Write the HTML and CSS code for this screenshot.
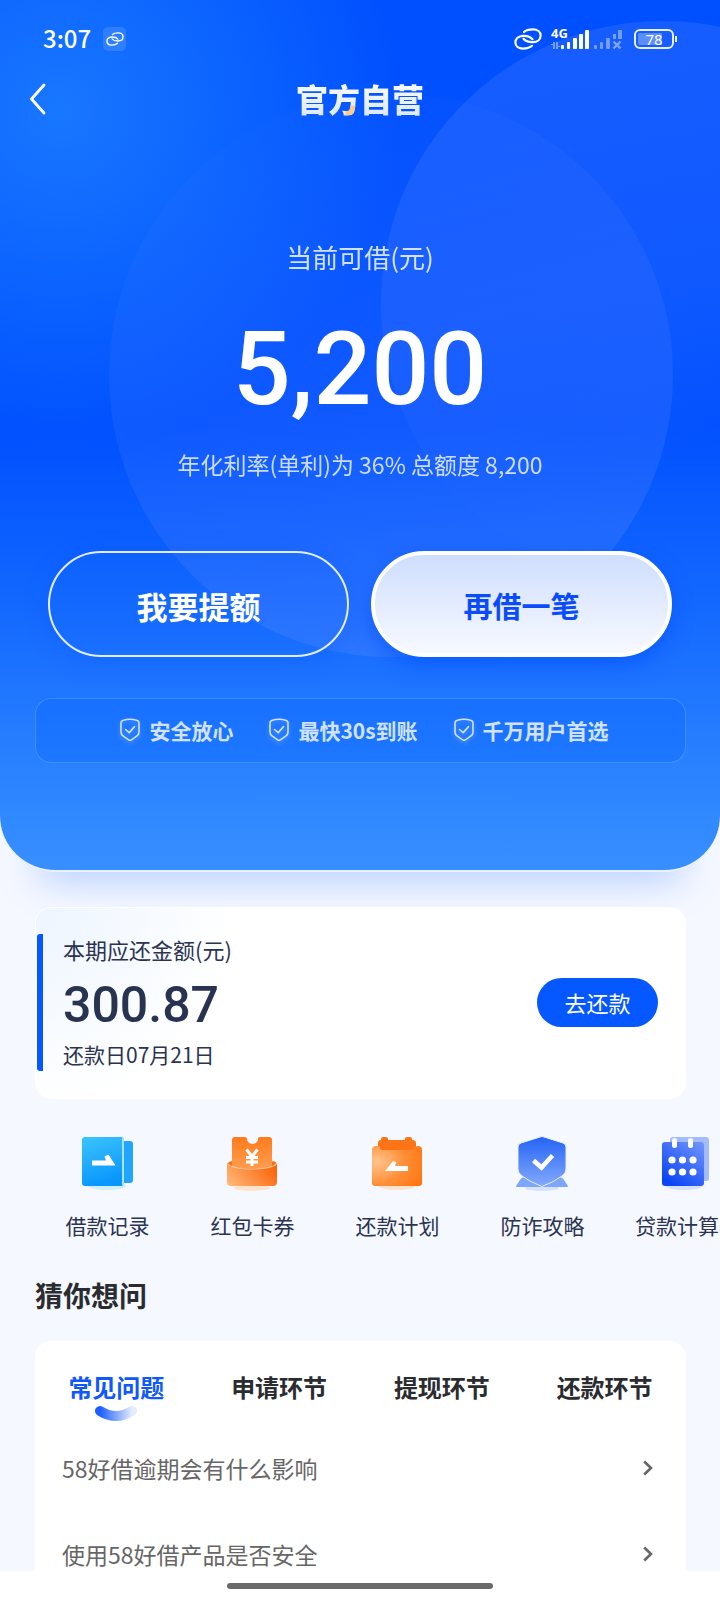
FILE: index.html
```html
<!DOCTYPE html>
<html lang="zh-CN">
<head>
<meta charset="utf-8">
<meta name="viewport" content="width=device-width, initial-scale=1">
<title>官方自营</title>
<link rel="stylesheet" href="styles.css">
</head>
<body>
<svg class="defs" aria-hidden="true">
  <defs>
    <symbol id="link" viewBox="0 0 28 22">
      <g fill="none" stroke="currentColor" stroke-width="2.2" stroke-linecap="round">
        <path d="M10 4 C12 2 15 1.400 19 1.400 C23.500 1.400 26.600 3.800 26.600 7.400 C26.600 11.200 23.500 14 19 14.200 C14.500 14.400 11.500 13.200 9.500 10.800"/>
        <path d="M18 17.800 C16 19.800 13 20.600 9 20.600 C4.500 20.600 1.400 18.200 1.400 14.600 C1.400 10.800 4.500 8 9 7.800 C13.500 7.600 16.500 8.800 18.500 11.200"/>
      </g>
    </symbol>
    <symbol id="shield" viewBox="0 0 20 24">
      <g fill="none" stroke="currentColor" stroke-width="1.600" stroke-linecap="round" stroke-linejoin="round">
        <path d="M3.400 2.200 Q10 .2 16.600 2.200 Q19 2.600 19 5 V14 Q19 16.500 17 17.800 L11.400 21.800 Q10 22.800 8.600 21.800 L3 17.800 Q1 16.500 1 14 V5 Q1 2.600 3.400 2.200 Z"/>
        <path d="M5.500 11.500 L9.200 14.600 L14.500 8.600"/>
      </g>
    </symbol>
    <symbol id="chevron" viewBox="0 0 12 18">
      <path d="M2.200 2.500 L9 9 L2.200 15.500" fill="none" stroke="currentColor" stroke-width="2.600"/>
    </symbol>
    <linearGradient id="sky" x1="0" y1="0" x2=".3" y2="1"><stop offset="0" stop-color="#3cc4fb"/><stop offset="1" stop-color="#0a97fd"/></linearGradient>
    <linearGradient id="orange" x1="0" y1="0" x2="0" y2="1"><stop offset="0" stop-color="#ff7a1c"/><stop offset="1" stop-color="#ff9d4e"/></linearGradient>
    <linearGradient id="wallet" x1="0" y1=".8" x2="1" y2=".4"><stop offset="0" stop-color="#ffb676"/><stop offset="1" stop-color="#fb660c"/></linearGradient>
    <radialGradient id="plan" cx=".1" cy=".4" r="1"><stop offset="0" stop-color="#ffc48c"/><stop offset=".55" stop-color="#ff8f38"/><stop offset="1" stop-color="#ff7612"/></radialGradient>
    <linearGradient id="guard" x1="0" y1="0" x2="0" y2="1"><stop offset="0" stop-color="#2463f4"/><stop offset="1" stop-color="#84aafc"/></linearGradient>
    <linearGradient id="calc" x1="1" y1="0" x2=".3" y2="1"><stop offset="0" stop-color="#7396ff"/><stop offset="1" stop-color="#0c46f4"/></linearGradient>
    <linearGradient id="smile" x1="0" y1="0" x2="1" y2="0"><stop offset="0" stop-color="#1c5eff"/><stop offset="1" stop-color="#e4ecff"/></linearGradient>
    <linearGradient id="ring1" x1=".4" y1="0" x2=".7" y2="1"><stop offset="0" stop-color="#6c90ff" stop-opacity=".02"/><stop offset=".45" stop-color="#6c90ff" stop-opacity=".13"/><stop offset="1" stop-color="#6c90ff" stop-opacity=".24"/></linearGradient>
    <linearGradient id="ring2" x1=".3" y1=".1" x2=".45" y2=".95"><stop offset="0" stop-color="#6489ff" stop-opacity=".22"/><stop offset=".45" stop-color="#6489ff" stop-opacity=".16"/><stop offset=".8" stop-color="#6489ff" stop-opacity=".02"/></linearGradient>
  </defs>
</svg>
<div class="app">
  <main class="content">
    <section class="hero">
      <svg class="hero-art" viewBox="0 0 720 871" preserveAspectRatio="xMidYMin slice" aria-hidden="true">
        <circle cx="391" cy="375" r="282" fill="url(#ring1)"/>
        <circle cx="663" cy="303" r="282" fill="url(#ring2)"/>
      </svg>
      <div class="status">
        <span class="clock">3:07</span>
        <span class="chip"><svg width="18" height="14" aria-hidden="true"><use href="#link"/></svg></span>
        <span class="spacer"></span>
        <svg width="28" height="22" aria-hidden="true"><use href="#link"/></svg>
        <svg class="signal" width="72" height="28" viewBox="0 0 72 28" aria-hidden="true">
          <text class="net" x="0" y="13">4G</text>
          <g fill="#fff">
            <rect x="10" y="20" width="3" height="4" rx="1"/><rect x="16" y="17" width="3" height="7" rx="1"/><rect x="22" y="13" width="4" height="11" rx="1"/><rect x="28" y="9" width="4" height="15" rx="1"/><rect x="34" y="5" width="4" height="19" rx="1"/>
          </g>
          <g fill="#fff" opacity=".4">
            <path d="M0 19h2v-2h2v7h-2v-4h-2zM5 17h2v4h2v1h-2v2h-2z"/>
            <rect x="43" y="20" width="3" height="4" rx="1"/><rect x="49" y="17" width="3" height="7" rx="1"/><rect x="55" y="13" width="4" height="11" rx="1"/><rect x="62" y="9" width="3" height="5"/><rect x="67" y="5" width="4" height="9"/>
          </g>
          <path d="M62.500 16.500l7 7m0-7l-7 7" stroke="#fff" stroke-width="2.400" opacity=".45"/>
        </svg>
        <span class="battery">78</span>
      </div>
      <header class="bar">
        <button class="back" aria-label="返回"><svg width="18" height="34" viewBox="0 0 18 34" aria-hidden="true"><path d="M16 3 L3.500 17 L16 31" fill="none" stroke="#fff" stroke-width="2.800" stroke-linecap="round" stroke-linejoin="round"/></svg></button>
        <h1 class="brand">官方自营</h1>
      </header>
      <p class="label">当前可借(元)</p>
      <p class="amount">5,200</p>
      <p class="rate">年化利率(单利)为 36% 总额度 8,200</p>
      <div class="actions">
        <button class="pill outline">我要提额</button>
        <button class="pill solid">再借一笔</button>
      </div>
      <ul class="perks">
        <li><svg class="shield" width="20" height="24" aria-hidden="true"><use href="#shield"/></svg>安全放心</li>
        <li><svg class="shield" width="20" height="24" aria-hidden="true"><use href="#shield"/></svg>最快30s到账</li>
        <li><svg class="shield" width="20" height="24" aria-hidden="true"><use href="#shield"/></svg>千万用户首选</li>
      </ul>
    </section>

    <section class="due">
      <div class="due-info">
        <p class="due-label">本期应还金额(元)</p>
        <p class="due-sum">300.87</p>
        <p class="due-date">还款日07月21日</p>
      </div>
      <button class="repay">去还款</button>
    </section>

    <nav class="shortcuts">
      <a href="#records">
        <svg width="56" height="56" viewBox="0 0 56 56" aria-hidden="true">
          <ellipse cx="27" cy="51" rx="19" ry="4" fill="#bfeaff" opacity=".7"/>
          <rect x="32" y="6" width="21" height="42" rx="3" fill="#20a6fd"/>
          <rect x="2" y="2" width="42" height="49" rx="3" fill="url(#sky)"/>
          <rect x="42" y="3" width="2" height="47" fill="#a8e4ff"/>
          <path d="M12 25.500h14l-1.500-4 4-2 7 11H12z" fill="#fff"/>
        </svg>
        借款记录
      </a>
      <a href="#coupons">
        <svg width="56" height="56" viewBox="0 0 56 56" aria-hidden="true">
          <ellipse cx="27" cy="53" rx="18" ry="3" fill="#ffdcc0" opacity=".8"/>
          <path d="M2 29Q4 26 8 26H46Q51 26 52 29L48 36H6Z" fill="#fb6f16"/>
          <path d="M7 5q0-3 3-3H20q2 0 2 2a5.500 5 0 0 0 11 0q0-2 2-2H44q3 0 3 3V33H7Z" fill="url(#orange)"/>
          <g fill="none" stroke="#fff" stroke-width="3"><path d="M21.500 14.500l5.500 7 5.500-7M27 21v10M21 22.500h12M21 27h12"/></g>
          <path d="M2 28Q6 34 27 34T52 28V47q0 4-4 4H6q-4 0-4-4Z" fill="url(#wallet)"/>
          <path d="M2 28Q6 34 27 34T52 28" fill="none" stroke="#ffc797" stroke-width="1.200"/>
        </svg>
        红包卡券
      </a>
      <a href="#plan">
        <svg width="56" height="56" viewBox="0 0 56 56" aria-hidden="true">
          <ellipse cx="27" cy="51" rx="18" ry="4" fill="#ffdcc0" opacity=".8"/>
          <path d="M8 18V8q0-3 3-3V4q0-2 2-2h3q2 0 2 2v1H35V4q0-2 2-2h3q2 0 2 2v1q4 0 4 3v10z" fill="#fc7416"/>
          <path d="M2 15q0-4 4-4h2q2 0 2 2t2 2H41q2 0 3-2t4-2q4 0 4 4V48q0 3-3 3H5q-3 0-3-3Z" fill="url(#plan)"/>
          <path d="M15 36l8-10 3 1-1 4h13v5z" fill="#fff"/>
        </svg>
        还款计划
      </a>
      <a href="#guard">
        <svg width="56" height="56" viewBox="0 0 56 56" aria-hidden="true">
          <ellipse cx="27" cy="53" rx="17" ry="3" fill="#d6e3ff"/>
          <path d="M9 42H45q3 1 4 3l4 6q0 1-1 1H2q-1 0-1-1l4-6q1-2 4-3z" fill="#7ea5f8"/>
          <path d="M25 2q2-1 4 0l19 6q3 1 3 4V34q0 4-4 7Q39 47 27 51.500 15 47 7 41q-4-3-4-7V12q0-3 3-4z" fill="url(#guard)" stroke="#e4eeff" stroke-width="1"/>
          <path d="M18.500 25.500l8 7 11-12" fill="none" stroke="#fff" stroke-width="4.500"/>
        </svg>
        防诈攻略
      </a>
      <a href="#calculator">
        <svg width="56" height="56" viewBox="0 0 56 56" aria-hidden="true">
          <ellipse cx="24" cy="51" rx="18" ry="4" fill="#ccdaff" opacity=".8"/>
          <rect x="10" y="2" width="39" height="44" rx="3" fill="#a2bcff"/>
          <rect x="2" y="7" width="42" height="44" rx="3" fill="url(#calc)"/>
          <g fill="#fff"><rect x="12" y="3" width="5" height="10" rx="2.500"/><rect x="28" y="3" width="5" height="10" rx="2.500"/><circle cx="12" cy="25" r="3.600"/><circle cx="22.500" cy="25" r="3.600"/><circle cx="33" cy="25" r="3.600"/><circle cx="12" cy="37" r="3.600"/><circle cx="22.500" cy="37" r="3.600"/><circle cx="33" cy="37" r="3.600"/></g>
        </svg>
        贷款计算器
      </a>
    </nav>

    <section class="faq">
      <h2>猜你想问</h2>
      <div class="faq-card">
        <div class="tabs" role="tablist">
          <button role="tab" aria-selected="true" class="tab active">常见问题
            <svg class="smile" width="42" height="18" viewBox="0 0 42 18" aria-hidden="true"><path d="M5 6Q21 16 37 6" fill="none" stroke="url(#smile)" stroke-width="10" stroke-linecap="round"/></svg>
          </button>
          <button role="tab" aria-selected="false" class="tab">申请环节</button>
          <button role="tab" aria-selected="false" class="tab">提现环节</button>
          <button role="tab" aria-selected="false" class="tab">还款环节</button>
        </div>
        <a class="question" href="#q1">58好借逾期会有什么影响<svg width="12" height="18" aria-hidden="true"><use href="#chevron"/></svg></a>
        <a class="question" href="#q2">使用58好借产品是否安全<svg width="12" height="18" aria-hidden="true"><use href="#chevron"/></svg></a>
      </div>
    </section>
  </main>
  <footer class="gesture"><span></span></footer>
</div>
</body>
</html>
```
FILE: styles.css
```css
* { box-sizing: border-box; }
body {
  margin: 0;
  background: #fff;
  color: #2a3350;
  font-family: "Noto Sans CJK SC", "Noto Sans", sans-serif;
}
h1, h2, p, ul { margin: 0; padding: 0; font-weight: 400; }
ul { list-style: none; }
button { margin: 0; padding: 0; border: 0; background: none; font-family: inherit; cursor: pointer; }
a { color: inherit; text-decoration: none; }
svg { display: block; flex: none; }
.defs { position: absolute; width: 0; height: 0; }

.app { display: flex; flex-direction: column; height: 100vh; }
.content {
  flex: 1;
  min-height: 0;
  overflow: hidden auto;
  scrollbar-width: none;
  isolation: isolate;
  background: #f5f8ff;
}

/* Hero */
.hero {
  position: relative;
  z-index: 1;
  padding-bottom: 107px;
  overflow: hidden;
  border-bottom: 2px solid #e9f1ff;
  border-radius: 0 0 56px 56px;
  color: #fff;
  background:
    radial-gradient(circle at 60px 110px, #1877ff 0, rgba(20, 112, 255, .8) 120px, rgba(0, 80, 255, 0) 340px),
    linear-gradient(180deg, #0050ff 0, #0050ff 49%, #0c60ff 63%, #1b71ff 76%, #2d86ff 91%, #378fff 100%);
}
.hero-art { position: absolute; inset: 0; z-index: -1; width: 100%; height: 100%; }
.status {
  display: flex;
  align-items: center;
  height: 77px;
  padding: 0 42px 0 43px;
}
.clock { font-size: 24px; line-height: 32px; font-weight: 500; padding-bottom: 2px; }
.chip {
  display: grid;
  place-items: center;
  width: 23px;
  height: 24px;
  margin-left: 12px;
  border-radius: 5px;
  background: rgba(255, 255, 255, .12);
}
.spacer { flex: 1; }
.signal { margin: 0 11px 0 9px; }
.net { fill: #fff; font: 700 13px "Noto Sans", sans-serif; }
.battery {
  position: relative;
  width: 40px;
  height: 20px;
  margin-right: 4px;
  padding: 2px;
  border: 2px solid #e8f0ff;
  border-radius: 6px;
  background: linear-gradient(90deg, rgba(255, 255, 255, .3) 75%, transparent 75%) content-box;
  font: 400 15px/12px "Noto Sans", sans-serif;
  text-align: center;
}
.battery::after {
  content: "";
  position: absolute;
  right: -5px;
  top: 5px;
  width: 2px;
  height: 6px;
  background: #e8f0ff;
}
.bar {
  display: grid;
  grid-template-columns: 60px 1fr 60px;
  align-items: start;
  height: 44px;
}
.back { display: grid; place-items: center start; height: 44px; padding-left: 28px; }
.brand {
  justify-self: center;
  font-size: 32px;
  line-height: 42px;
  font-weight: 900;
  color: transparent;
  background:
    radial-gradient(circle at 58px 37px, #ffc987 0, #ffc987 8px, transparent 9px),
    linear-gradient(180deg, #fff, #dbe6ff);
  background-clip: text;
  -webkit-background-clip: text;
}
.label { margin-top: 118px; font-size: 26px; line-height: 36px; text-align: center; opacity: .82; }
.amount { margin-top: 34px; font: 500 102px/120px Roboto, sans-serif; text-align: center; }
.rate { margin-top: 18px; font-size: 23px; line-height: 34px; text-align: center; opacity: .78; }
.actions {
  display: grid;
  grid-template-columns: 1fr 1fr;
  gap: 22px;
  margin-top: 70px;
  padding: 0 48px;
}
.pill { height: 106px; padding-top: 2px; border-radius: 53px; font-weight: 700; }
.outline {
  border: 2px solid #e2edff;
  color: #fff;
  font-size: 31px;
  box-shadow: 0 4px 24px rgba(0, 80, 255, .3);
}
.solid {
  border: 4px solid #fff;
  background: linear-gradient(180deg, #cfdefd, #f7f9ff);
  color: #0a4cfa;
  font-size: 29px;
  box-shadow: 0 8px 20px rgba(0, 78, 255, .6);
}
.perks {
  display: flex;
  justify-content: center;
  align-items: center;
  gap: 36px;
  height: 65px;
  margin: 41px 34px 0 35px;
  padding: 0 0 2px 8px;
  border: 1px solid rgba(120, 180, 255, .4);
  border-radius: 16px;
  background: rgba(0, 90, 255, .25);
  color: #d0e2ff;
  font-size: 21px;
  line-height: 30px;
  font-weight: 700;
  white-space: nowrap;
}
.perks li { display: flex; align-items: center; gap: 9px; }
.shield { filter: drop-shadow(0 2px 2px rgba(200, 225, 255, .35)); }

/* Repayment card */
.due {
  position: relative;
  display: flex;
  align-items: center;
  justify-content: space-between;
  margin: 35px 34px 0 35px;
  padding: 26px 27px 27px 1px;
  border: 1px solid #fff;
  border-radius: 16px;
  background: radial-gradient(circle at 0 0, #edf5ff 0, #fff 200px);
}
.due::before {
  content: "";
  position: absolute;
  z-index: -1;
  left: 0;
  right: 0;
  top: -76px;
  height: 40px;
  border-radius: 40px;
  box-shadow: 0 8px 38px rgba(60, 125, 255, .36);
}
.due-info {
  padding: 0 0 3px 20px;
  border-left: 6px solid #0558ff;
  border-radius: 3px;
}
.due-label { font-size: 22px; line-height: 30px; }
.due-sum { margin-top: 6px; font: 500 50px/70px Roboto, sans-serif; color: #273350; }
.due-date { font-size: 21px; line-height: 28px; }
.repay {
  width: 121px;
  height: 49px;
  padding-bottom: 2px;
  border-radius: 25px;
  background: #0558ff;
  color: #fff;
  font-size: 22px;
  line-height: 32px;
}

/* Shortcuts */
.shortcuts { display: flex; margin-top: 36px; padding-left: 35px; overflow: hidden; }
.shortcuts a {
  display: flex;
  flex: 0 0 145px;
  flex-direction: column;
  align-items: center;
  gap: 18px;
  font-size: 21px;
  line-height: 32px;
  white-space: nowrap;
}

/* Questions */
.faq { padding: 34px 34px 0 35px; }
.faq h2 { font-size: 28px; line-height: 40px; font-weight: 700; color: #2b2c30; }
.faq-card { margin-top: 26px; padding-top: 24px; border-radius: 16px; background: #fff; }
.tabs { display: grid; grid-template-columns: repeat(4, 1fr); }
.tab { position: relative; padding-bottom: 16px; font-size: 24px; line-height: 44px; font-weight: 700; color: #2b2c30; }
.tab.active { color: #0f57ff; }
.smile { position: absolute; left: 50%; bottom: 2px; margin-left: -21px; }
.question {
  display: flex;
  align-items: center;
  justify-content: space-between;
  height: 86px;
  padding: 0 32px 0 27px;
  font-size: 23px;
  line-height: 34px;
  color: #666;
}

/* Home indicator */
.gesture { display: grid; justify-items: center; align-items: start; height: 29px; padding-top: 12px; background: #fff; }
.gesture span { width: 37%; height: 6px; border-radius: 3px; background: #6a6a6a; }
```
